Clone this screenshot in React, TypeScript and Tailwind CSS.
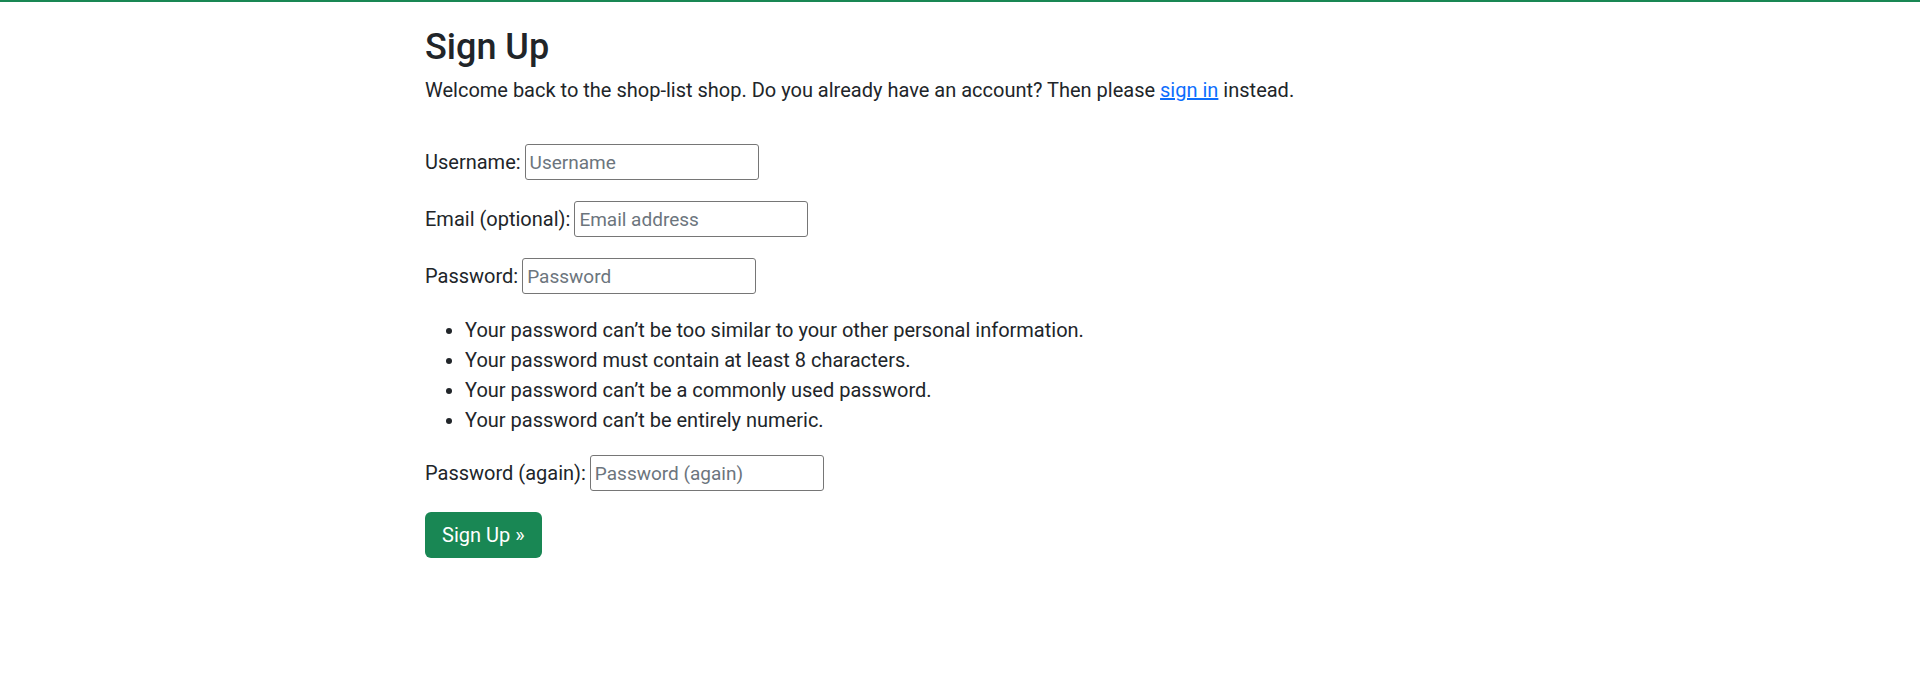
import React from 'react';

const Field = (props: { label: string; placeholder: string; type?: string }) => {
	return (
		<div className="flex items-center h-[36px] mb-[21px]">
			<label className="mr-[4px]">{props.label}</label>
			<input
				type={props.type || 'text'}
				placeholder={props.placeholder}
				className="w-[234px] h-[36px] border border-[#767676] rounded-[3px] px-[4px] text-[19px] placeholder:text-[#6c757d] outline-none"
			/>
		</div>
	);
};

const App = () => {
	return (
		<div className="min-h-[689px] bg-white border-t-2 border-[#198754] text-[#212529] text-[20px] leading-[30px] font-['Roboto',sans-serif]">
			<div className="pl-[425px] pt-[24px]">
				<h1 className="text-[36px] leading-[42px] font-medium mb-[7px]">Sign Up</h1>
				<p className="mb-[39px]">
					Welcome back to the shop-list shop. Do you already have an account? Then please{' '}
					<a href="#" className="text-[#0d6efd] underline">sign in</a> instead.
				</p>
				<form>
					<Field label="Username:" placeholder="Username" />
					<Field label="Email (optional):" placeholder="Email address" type="email" />
					<Field label="Password:" placeholder="Password" type="password" />
					<ul className="list-disc pl-[40px] mt-[4px] mb-[20px]">
						<li>Your password can’t be too similar to your other personal information.</li>
						<li>Your password must contain at least 8 characters.</li>
						<li>Your password can’t be a commonly used password.</li>
						<li>Your password can’t be entirely numeric.</li>
					</ul>
					<Field label="Password (again):" placeholder="Password (again)" type="password" />
					<button type="submit" className="bg-[#198754] text-white rounded-[6px] px-[17px] h-[46px] text-[20px]">
						Sign Up »
					</button>
				</form>
			</div>
		</div>
	);
};

export default App;
